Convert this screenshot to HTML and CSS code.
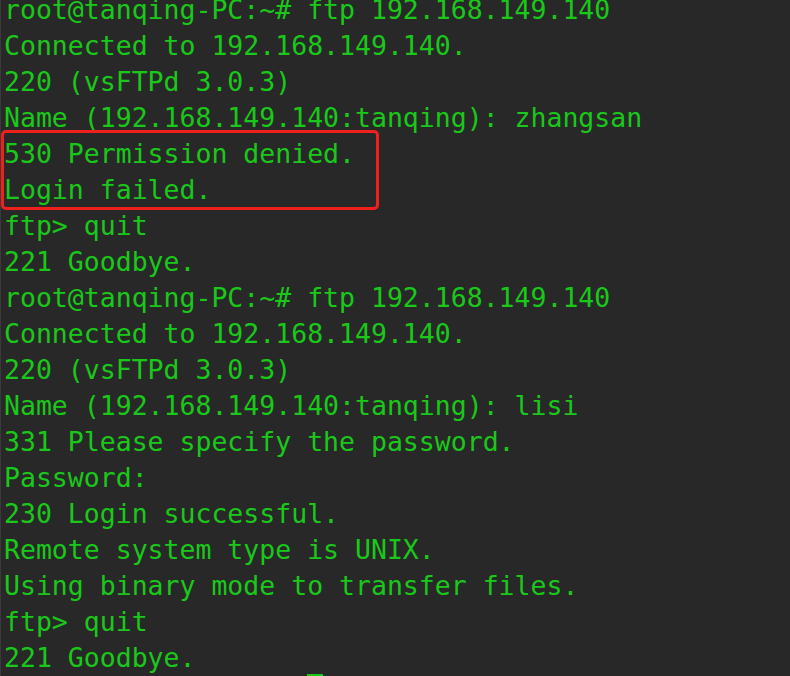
FILE: index.html
```html
<!DOCTYPE html>
<html>
<head>
<meta charset="utf-8">
<link rel="stylesheet" href="styles.css">
</head>
<body>
<div class="term">
<pre class="out">root@tanqing-PC:~# ftp 192.168.149.140
Connected to 192.168.149.140.
220 (vsFTPd 3.0.3)
Name (192.168.149.140:tanqing): zhangsan
530 Permission denied.
Login failed.
ftp&gt; quit
221 Goodbye.
root@tanqing-PC:~# ftp 192.168.149.140
Connected to 192.168.149.140.
220 (vsFTPd 3.0.3)
Name (192.168.149.140:tanqing): lisi
331 Please specify the password.
Password:
230 Login successful.
Remote system type is UNIX.
Using binary mode to transfer files.
ftp&gt; quit
221 Goodbye.
                   <span class="cursor"></span></pre>
<div class="mark"></div>
</div>
</body>
</html>
```
FILE: styles.css
```css
html, body {
  margin: 0;
  padding: 0;
  background: #282828;
  overflow: hidden;
}
.term {
  position: relative;
  width: 790px;
  height: 676px;
  overflow: hidden;
  background: #282828;
  border-left: 1px solid #3a3a3a;
  box-sizing: border-box;
}
.out {
  margin: -8px 0 0 3px;
  font-family: "DejaVu Sans Mono", monospace;
  font-size: 26.5px;
  line-height: 36px;
  color: #1ac81a;
  white-space: pre;
}
.cursor {
  display: inline-block;
  width: 16px;
  height: 36px;
  vertical-align: top;
  position: relative;
  top: -2px;
  background: #1ac81a;
}
.mark {
  position: absolute;
  left: 0;
  top: 130px;
  width: 378px;
  height: 80px;
  border: 3px solid #f0201c;
  border-radius: 5px;
  box-sizing: border-box;
}
```
